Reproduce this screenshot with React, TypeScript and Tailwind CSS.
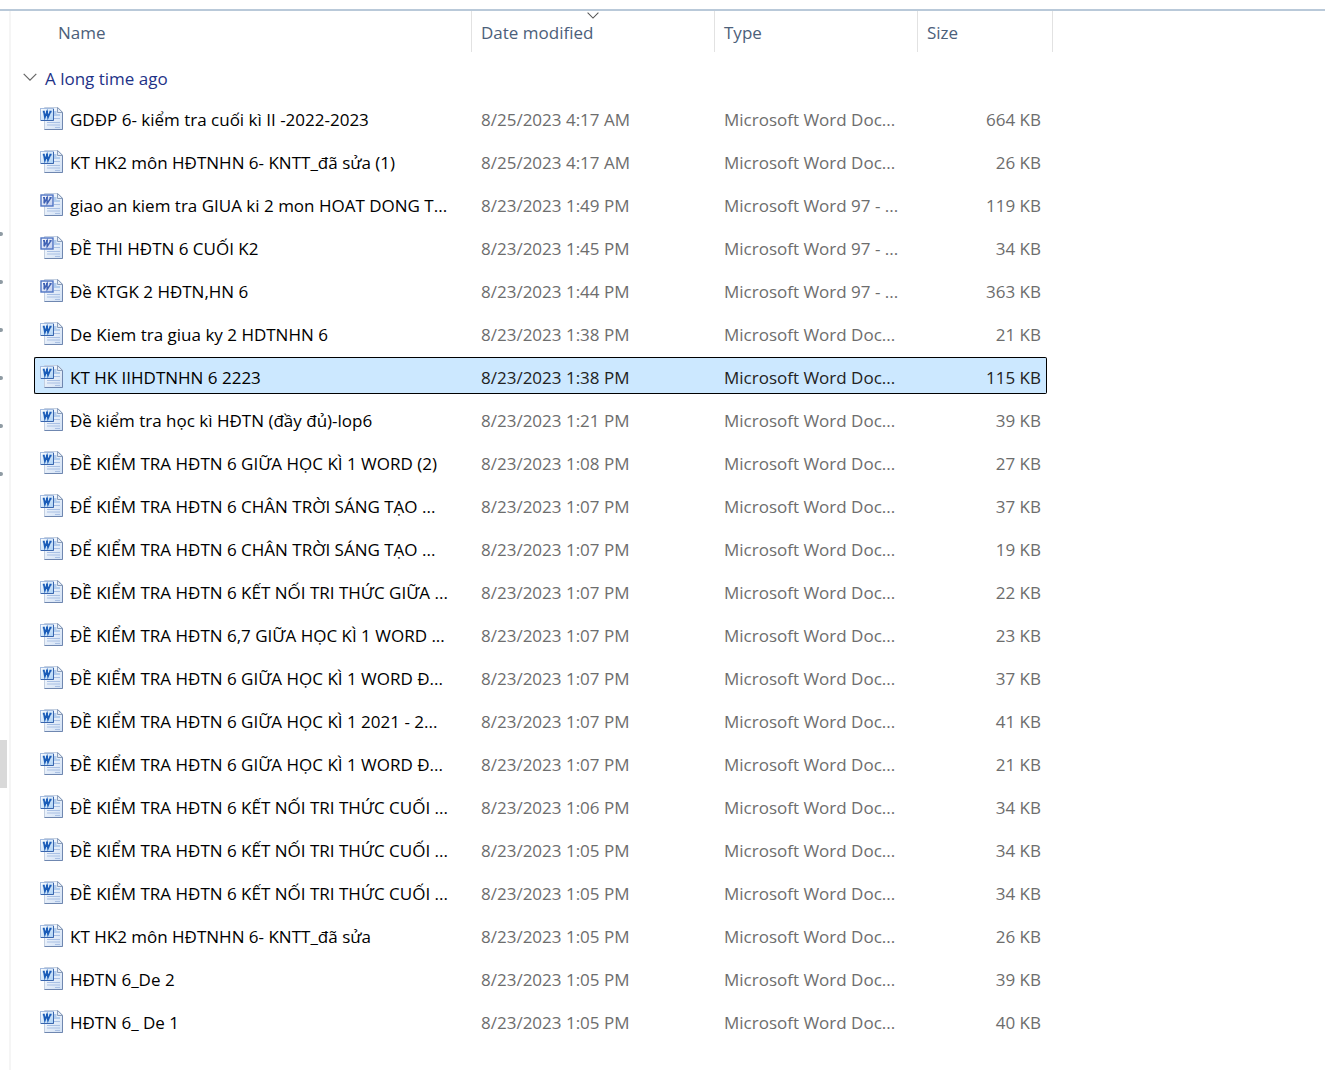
type FileEntry = {
  name: string
  modified: string
  size: string
  legacy?: boolean
  selected?: boolean
}

const files: FileEntry[] = [
  { name: 'GDĐP 6- kiểm tra cuối kì II -2022-2023', modified: '8/25/2023 4:17 AM', size: '664 KB' },
  { name: 'KT HK2 môn HĐTNHN 6- KNTT_đã sửa (1)', modified: '8/25/2023 4:17 AM', size: '26 KB' },
  { name: 'giao an kiem tra GIUA ki 2 mon HOAT DONG T...', modified: '8/23/2023 1:49 PM', size: '119 KB', legacy: true },
  { name: 'ĐỀ THI HĐTN 6 CUỐI K2', modified: '8/23/2023 1:45 PM', size: '34 KB', legacy: true },
  { name: 'Đề KTGK 2 HĐTN,HN 6', modified: '8/23/2023 1:44 PM', size: '363 KB', legacy: true },
  { name: 'De Kiem tra giua ky 2 HDTNHN 6', modified: '8/23/2023 1:38 PM', size: '21 KB' },
  { name: 'KT HK IIHDTNHN 6 2223', modified: '8/23/2023 1:38 PM', size: '115 KB', selected: true },
  { name: 'Đề kiểm tra học kì HĐTN (đầy đủ)-lop6', modified: '8/23/2023 1:21 PM', size: '39 KB' },
  { name: 'ĐỀ KIỂM TRA HĐTN 6 GIỮA HỌC KÌ 1 WORD (2)', modified: '8/23/2023 1:08 PM', size: '27 KB' },
  { name: 'ĐỂ KIỂM TRA HĐTN 6 CHÂN TRỜI SÁNG TẠO ...', modified: '8/23/2023 1:07 PM', size: '37 KB' },
  { name: 'ĐỂ KIỂM TRA HĐTN 6 CHÂN TRỜI SÁNG TẠO ...', modified: '8/23/2023 1:07 PM', size: '19 KB' },
  { name: 'ĐỀ KIỂM TRA HĐTN 6 KẾT NỐI TRI THỨC GIỮA ...', modified: '8/23/2023 1:07 PM', size: '22 KB' },
  { name: 'ĐỀ KIỂM TRA HĐTN 6,7 GIỮA HỌC KÌ 1 WORD ...', modified: '8/23/2023 1:07 PM', size: '23 KB' },
  { name: 'ĐỀ KIỂM TRA HĐTN 6 GIỮA HỌC KÌ 1 WORD Đ...', modified: '8/23/2023 1:07 PM', size: '37 KB' },
  { name: 'ĐỀ KIỂM TRA HĐTN 6 GIỮA HỌC KÌ 1 2021 - 2...', modified: '8/23/2023 1:07 PM', size: '41 KB' },
  { name: 'ĐỀ KIỂM TRA HĐTN 6 GIỮA HỌC KÌ 1 WORD Đ...', modified: '8/23/2023 1:07 PM', size: '21 KB' },
  { name: 'ĐỀ KIỂM TRA HĐTN 6 KẾT NỐI TRI THỨC CUỐI ...', modified: '8/23/2023 1:06 PM', size: '34 KB' },
  { name: 'ĐỀ KIỂM TRA HĐTN 6 KẾT NỐI TRI THỨC CUỐI ...', modified: '8/23/2023 1:05 PM', size: '34 KB' },
  { name: 'ĐỀ KIỂM TRA HĐTN 6 KẾT NỐI TRI THỨC CUỐI ...', modified: '8/23/2023 1:05 PM', size: '34 KB' },
  { name: 'KT HK2 môn HĐTNHN 6- KNTT_đã sửa', modified: '8/23/2023 1:05 PM', size: '26 KB' },
  { name: 'HĐTN 6_De 2', modified: '8/23/2023 1:05 PM', size: '39 KB' },
  { name: 'HĐTN 6_ De 1', modified: '8/23/2023 1:05 PM', size: '40 KB' },
]

const pins = [1, 2, 3, 4, 5, 6]

function Chevron({ className }: { className: string }) {
  return (
    <svg viewBox="0 0 14 8" className={className} fill="none" stroke="currentColor" strokeWidth="1.2" aria-hidden="true">
      <path d="M.7.8 7 7.100 13.300.8" />
    </svg>
  )
}

function WordIcon({ legacy }: { legacy?: boolean }) {
  return (
    <svg width="24" height="24" viewBox="0 0 24 24" className="shrink-0" aria-hidden="true">
      <defs>
        <linearGradient id="page" x1="0" y1="0" x2="1" y2="1">
          <stop offset="0" stopColor="#fdfeff" />
          <stop offset="1" stopColor="#cfdff4" />
        </linearGradient>
        <linearGradient id="badge" x1="0" y1="0" x2="1" y2="1">
          <stop offset="0" stopColor="#ffffff" />
          <stop offset="1" stopColor="#a9d0f5" />
        </linearGradient>
        <linearGradient id="badgeLegacy" x1="0" y1="0" x2="1" y2="1">
          <stop offset="0" stopColor="#ffffff" />
          <stop offset="1" stopColor="#bccbee" />
        </linearGradient>
      </defs>
      <path d="M4.500 1.500H18L22.500 6v17.500H4.500z" fill="url(#page)" stroke="#c3cfe0" />
      <path d="M22.500 6v17.500H4.500" fill="none" stroke="#6f87b0" />
      <path d="M17.500 1.500V6.500h5z" fill="#e6edf6" stroke="#8c9fbc" />
      <path d="M14 5h2.500v3H20v2h-6z" fill="#b3cdec" />
      <path d="M14 12.500h6M7 16.500h13M7 19h13M15 21.500h5" stroke="#a9c0e4" />
      {legacy ? (
        <>
          <rect x="1" y="3" width="12" height="11" fill="url(#badgeLegacy)" stroke="#4f74c4" strokeWidth="1.400" />
          <path d="M3 5.800h2M6 5.800h2M9.500 5.800h2.200M4.300 5.800l-.2 5.600L7 5.800l.2 5.600 3.600-5.600" fill="none" stroke="#3f61b4" strokeWidth="1.500" />
        </>
      ) : (
        <>
          <rect x=".5" y="2.500" width="13" height="12" fill="url(#badge)" stroke="#a4bce0" />
          <path d="M1 14.500h12.500V3" fill="none" stroke="#3a66ae" />
          <path d="M2.800 5.600h2M6 5.600h2M9.400 5.600h2.200M3.900 5.600l1 5.700L7 5.900l1 5.400 2.400-5.700" fill="none" stroke="#1a5cb8" strokeWidth="1.700" />
        </>
      )}
    </svg>
  )
}

function FileRow({ file }: { file: FileEntry }) {
  const box = file.selected ? 'border-black bg-[#cce8ff]' : 'border-transparent'
  const detail = file.selected ? 'text-[#222222]' : 'text-[#6d6d6d]'

  return (
    <tr className="h-[43px] align-top" aria-selected={file.selected}>
      <td className="p-0">
        <div className={`ml-[23px] flex h-[37px] items-center gap-1.5 rounded-l-xs border-y border-l pl-[5px] text-black ${box}`}>
          <WordIcon legacy={file.legacy} />
          <span className="whitespace-nowrap pt-1">{file.name}</span>
        </div>
      </td>
      <td className={`p-0 ${detail}`}>
        <div className={`flex h-[37px] items-center border-y pl-[9px] pt-1 ${box}`}>{file.modified}</div>
      </td>
      <td className={`p-0 ${detail}`}>
        <div className={`flex h-[37px] items-center border-y pl-[9px] pt-1 ${box}`}>
          {file.legacy ? 'Microsoft Word 97 - ...' : 'Microsoft Word Doc...'}
        </div>
      </td>
      <td className={`p-0 ${detail}`}>
        <div className={`mr-[6px] flex h-[37px] items-center justify-end rounded-r-xs border-y border-r pr-[5px] pt-1 ${box}`}>
          {file.size}
        </div>
      </td>
      <td className="p-0" />
    </tr>
  )
}

function HeaderCell({ label, width, sorted }: { label: string; width: string; sorted?: boolean }) {
  return (
    <th scope="col" className={`relative h-[41px] border-r border-[#e2e2e2] p-0 pt-0.5 text-left font-normal ${width}`}>
      {sorted && <Chevron className="absolute left-1/2 top-px w-3 -translate-x-1/2 text-[#555555]" />}
      <button type="button">{label}</button>
    </th>
  )
}

export default function App() {
  return (
    <div className="min-h-screen bg-white pt-[9px] font-['Open_Sans','Noto_Sans',sans-serif] text-[17px] leading-6">
      <div className="flex min-h-[calc(100vh-9px)] border-t-2 border-[#b9c9d9]">
        <aside className="w-[11px] shrink-0 border-r-2 border-[#f5f5f5] pt-[221px]">
          {pins.map((pin) => (
            <div key={pin} className="h-12">
              <div className="h-1 w-[3px] rounded-r-full bg-[#8f9ba3]" />
            </div>
          ))}
          <div className="mt-[220px] h-12 w-[7px] bg-[#d9d9d9]" />
        </aside>
        <main className="min-w-0 flex-1">
          <table className="w-full table-fixed border-separate border-spacing-0">
            <thead className="text-[#4c607a]">
              <tr>
                <HeaderCell label="Name" width="w-[461px] pl-[47px]" />
                <HeaderCell label="Date modified" width="w-[243px] pl-[9px]" sorted />
                <HeaderCell label="Type" width="w-[203px] pl-[9px]" />
                <HeaderCell label="Size" width="w-[135px] pl-[9px]" />
                <th className="p-0" />
              </tr>
            </thead>
            <tbody>
              <tr className="h-[47px]">
                <th colSpan={5} scope="rowgroup" className="p-0 pt-[7px] pl-3 text-left font-normal text-[#1e3287]">
                  <button type="button" className="flex items-center gap-2">
                    <Chevron className="mb-1 w-3.5 text-[#666666]" />
                    A long time ago
                  </button>
                </th>
              </tr>
              {files.map((file, index) => (
                <FileRow key={index} file={file} />
              ))}
            </tbody>
          </table>
        </main>
      </div>
    </div>
  )
}
